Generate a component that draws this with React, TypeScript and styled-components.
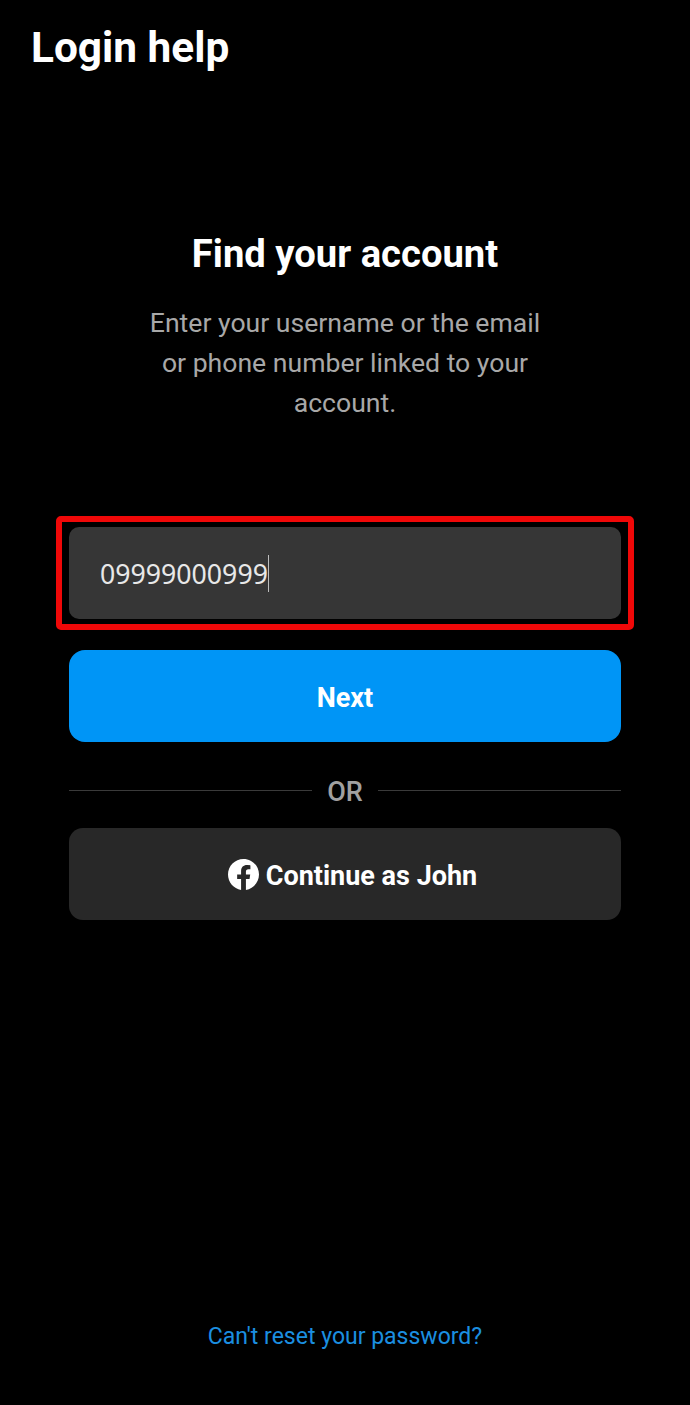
import { createGlobalStyle } from "styled-components"
import styled from "styled-components"

const GlobalStyle = createGlobalStyle`
  html, body {
    margin: 0;
    padding: 0;
    background: #000;
  }
  * {
    box-sizing: border-box;
  }
`

const FacebookIcon = () => (
  <svg width="31" height="31" viewBox="0 0 24 24" aria-hidden="true">
    <path
      fill="#fff"
      d="M24 12.07C24 5.4 18.63 0 12 0S0 5.4 0 12.07c0 6.03 4.39 11.02 10.13 11.93v-8.44H7.08v-3.49h3.05V9.41c0-3.02 1.79-4.69 4.53-4.69 1.31 0 2.69.24 2.69.24v2.97h-1.52c-1.49 0-1.96.93-1.96 1.89v2.25h3.33l-.53 3.49h-2.8V24C19.61 23.09 24 18.1 24 12.07z"
    />
  </svg>
)

export default function App() {
  return (
    <>
      <GlobalStyle />
      <Page>
        <Title>Login help</Title>
        <Main>
          <Heading>Find your account</Heading>
          <Description>
            Enter your username or the email
            <br />
            or phone number linked to your
            <br />
            account.
          </Description>
          <Form>
            <InputWrapper>
              <Input>
                09999000999
                <Caret />
              </Input>
              <Highlight />
            </InputWrapper>
            <NextButton>
              <ButtonLabel>Next</ButtonLabel>
            </NextButton>
            <Divider>
              <Line />
              <OrLabel>OR</OrLabel>
              <Line />
            </Divider>
            <FacebookButton>
              <FacebookIcon />
              <ButtonLabel>Continue as John</ButtonLabel>
            </FacebookButton>
          </Form>
        </Main>
        <Footer>
          <FooterLink>Can't reset your password?</FooterLink>
        </Footer>
      </Page>
    </>
  )
}

const Page = styled.div`
  display: flex;
  flex-direction: column;
  width: 690px;
  height: 1405px;
  background: #000;
  color: #fff;
  font-family: Roboto, "Liberation Sans", sans-serif;
  overflow: hidden;
`

const Title = styled.h1`
  margin: 0;
  padding: 24px 0 0 31px;
  font-size: 42.4px;
  line-height: 48px;
  font-weight: 700;
`

const Main = styled.main`
  flex: 1;
  display: flex;
  flex-direction: column;
  align-items: center;
  padding: 0 69px;
`

const Heading = styled.h2`
  margin: 160px 0 0;
  font-size: 38.2px;
  line-height: 44px;
  font-weight: 700;
`

const Description = styled.p`
  margin: 27px 0 0;
  text-align: center;
  font-size: 26.6px;
  line-height: 40px;
  color: #a8a8a8;
`

const Form = styled.div`
  display: flex;
  flex-direction: column;
  width: 100%;
  margin-top: 104px;
`

const InputWrapper = styled.div`
  position: relative;
`

const Input = styled.div`
  display: flex;
  align-items: center;
  height: 92px;
  padding-left: 31px;
  border-radius: 10px;
  background: #363636;
  font-family: "Noto Sans", sans-serif;
  font-size: 26.7px;
  color: #e8e8e8;
`

const Caret = styled.span`
  width: 1px;
  height: 37px;
  background: #bdbdbd;
`

const Highlight = styled.div`
  position: absolute;
  inset: -11px -13px;
  border: 6px solid #f00808;
  border-radius: 5px;
  pointer-events: none;
`

const NextButton = styled.div`
  display: flex;
  align-items: center;
  justify-content: center;
  height: 92px;
  margin-top: 31px;
  border-radius: 16px;
  background: #0095f6;
  font-size: 27px;
  font-weight: 700;
`

const ButtonLabel = styled.span`
  margin-top: 4px;
`

const Divider = styled.div`
  display: flex;
  align-items: center;
  gap: 15px;
  height: 86px;
  padding-top: 11px;
`

const Line = styled.div`
  flex: 1;
  height: 1px;
  background: #3a3a3a;
`

const OrLabel = styled.span`
  margin-top: 3px;
  font-size: 27px;
  font-weight: 500;
  color: #a0a0a0;
`

const FacebookButton = styled.div`
  display: flex;
  align-items: center;
  justify-content: center;
  gap: 7px;
  height: 92px;
  padding-left: 15px;
  border-radius: 14px;
  background: #282828;
  font-size: 27px;
  font-weight: 700;
`

const Footer = styled.footer`
  display: flex;
  justify-content: center;
  padding-bottom: 51px;
`

const FooterLink = styled.a`
  font-size: 23px;
  line-height: 34px;
  color: #1b8fe0;
`
